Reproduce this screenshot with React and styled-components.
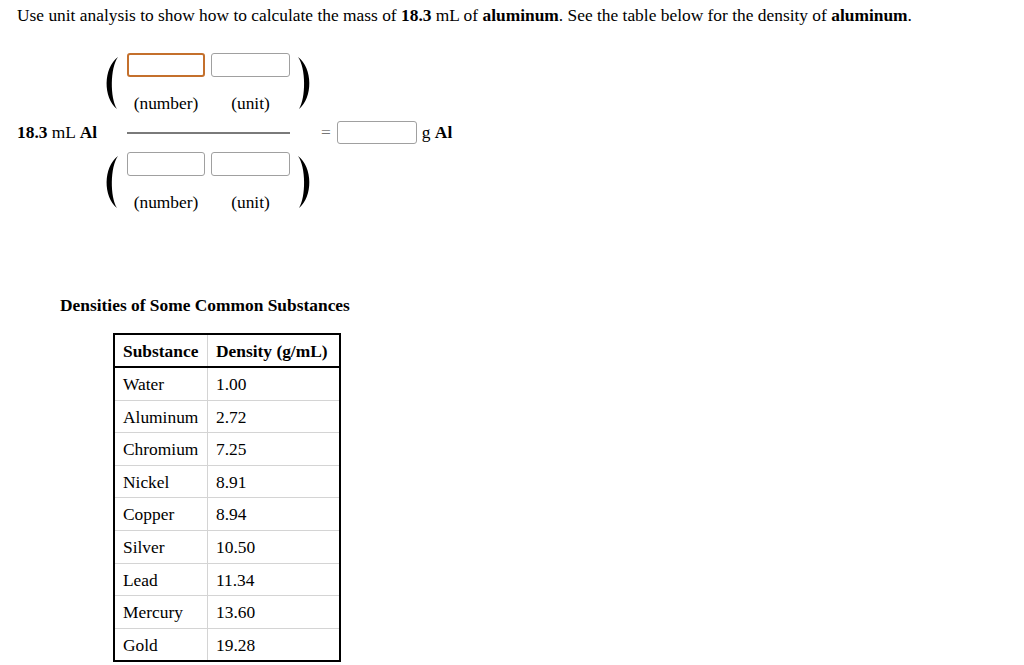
import React from 'react';
import styled, { createGlobalStyle } from 'styled-components';

const GlobalStyle = createGlobalStyle`
  body {
    margin: 0;
    background: #fff;
    color: #000;
    font-family: "Liberation Serif", "Times New Roman", serif;
    font-size: 17.4px;
  }
`;

const Page = styled.div`
  padding: 6px 0 0 17px;
`;

const Prompt = styled.p`
  margin: 0;
  line-height: 18px;
`;

const Equation = styled.div`
  display: flex;
  align-items: center;
  margin-top: 29px;
`;

const Given = styled.div`
  width: 86px;
  white-space: nowrap;
`;

const Fraction = styled.div`
  display: flex;
  flex-direction: column;
  width: 212px;
`;

const Factor = styled.div`
  display: flex;
  align-items: center;
`;

const Cells = styled.div`
  display: grid;
  grid-template-columns: 78px 79px;
  column-gap: 6px;
  row-gap: 17px;
  margin: 0 7px 0 8px;
`;

const Box = styled.div`
  box-sizing: border-box;
  height: 24px;
  border: ${(p) => (p.$active ? '2px solid #c4702c' : '1px solid #a0a0a0')};
  border-radius: 3px;
  background: #fff;
`;

const Label = styled.div`
  text-align: center;
  line-height: 18px;
`;

const Bar = styled.div`
  height: 2px;
  background: #7a7a7a;
  width: 163px;
  margin: 20px 0 18px 24px;
`;

const Equals = styled.span`
  color: #777;
  margin: 0 6px 0 6px;
`;

const Result = styled(Box)`
  width: 80px;
  height: 23px;
`;

const Unit = styled.span`
  margin-left: 5px;
`;

const Heading = styled.div`
  font-weight: bold;
  margin: 85px 0 0 43px;
  line-height: 18px;
`;

const Table = styled.table`
  border-collapse: collapse;
  table-layout: fixed;
  width: 228px;
  margin: 19px 0 0 96px;
  border: 2px solid #000;
`;

const HeadCell = styled.th`
  text-align: left;
  font-weight: bold;
  padding: 7px 8px 6px;
  line-height: 18px;
  border-bottom: 2px solid #000;
  border-left: 1px solid #d4d4d4;
  width: ${(p) => p.$w}px;
  white-space: nowrap;
`;

const Cell = styled.td`
  padding: 7px 8px 6.6px;
  line-height: 18px;
  border-top: 1px solid #d4d4d4;
  border-left: 1px solid #d4d4d4;
  white-space: nowrap;
`;

const Paren = ({ right }) => (
  <svg width="16" height="54" viewBox="0 0 16 54" style={{ transform: right ? 'scaleX(-1)' : 'none', flex: 'none' }}>
    <path d="M15 1 C 0 12, 0 42, 14 53 C 7 42, 7 12, 15 1 Z" fill="#000" />
  </svg>
);

const Slot = ({ active }) => (
  <Factor>
    <Paren />
    <Cells>
      <Box $active={active} />
      <Box />
      <Label>(number)</Label>
      <Label>(unit)</Label>
    </Cells>
    <Paren right />
  </Factor>
);

const densities = [
  ['Water', '1.00'],
  ['Aluminum', '2.72'],
  ['Chromium', '7.25'],
  ['Nickel', '8.91'],
  ['Copper', '8.94'],
  ['Silver', '10.50'],
  ['Lead', '11.34'],
  ['Mercury', '13.60'],
  ['Gold', '19.28'],
];

export default function App() {
  return (
    <Page>
      <GlobalStyle />
      <Prompt>
        Use unit analysis to show how to calculate the mass of <b>18.3</b> mL of <b>aluminum</b>. See the table below
        for the density of <b>aluminum</b>.
      </Prompt>
      <Equation>
        <Given>
          <b>18.3</b> mL <b>Al</b>
        </Given>
        <Fraction>
          <Slot active />
          <Bar />
          <Slot />
        </Fraction>
        <Equals>=</Equals>
        <Result />
        <Unit>
          g <b>Al</b>
        </Unit>
      </Equation>
      <Heading>Densities of Some Common Substances</Heading>
      <Table>
        <thead>
          <tr>
            <HeadCell $w={76}>Substance</HeadCell>
            <HeadCell $w={115}>Density (g/mL)</HeadCell>
          </tr>
        </thead>
        <tbody>
          {densities.map(([name, value]) => (
            <tr key={name}>
              <Cell>{name}</Cell>
              <Cell>{value}</Cell>
            </tr>
          ))}
        </tbody>
      </Table>
    </Page>
  );
}
